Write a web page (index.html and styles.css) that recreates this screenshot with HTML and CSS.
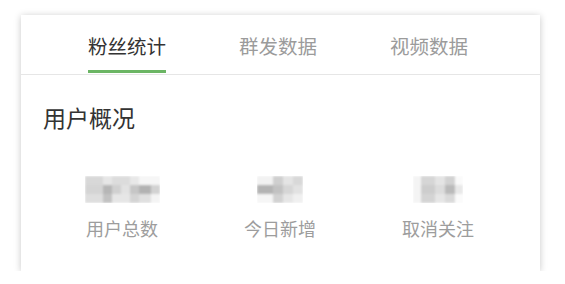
FILE: index.html
```html
<!DOCTYPE html>
<html lang="zh-CN">
  <head>
    <meta charset="UTF-8" />
    <meta name="viewport" content="width=device-width, initial-scale=1.0" />
    <title>粉丝统计</title>
    <link rel="stylesheet" href="styles.css">
  </head>
  <body>
    <svg class="defs" width="0" height="0">
      <filter id="mosaicBlur"><feGaussianBlur stdDeviation="1.1" /></filter>
    </svg>

    <div class="card">
      <div class="tabs">
        <div class="tab active">粉丝统计</div>
        <div class="tab">群发数据</div>
        <div class="tab">视频数据</div>
      </div>

      <h2 class="title">用户概况</h2>

      <!-- 数值已打码 -->
      <div class="stats">
        <div class="stat">
          <svg class="mask" width="75" height="27" viewBox="0 0 75 27">
            <g filter="url(#mosaicBlur)">
              <rect x="0" y="0" width="18" height="9" fill="#d8d8d8" />
              <rect x="18" y="0" width="9" height="9" fill="#e6e6e6" />
              <rect x="27" y="0" width="18" height="9" fill="#dcdcdc" />
              <rect x="45" y="0" width="9" height="9" fill="#e8e8e8" />
              <rect x="54" y="0" width="21" height="9" fill="#f6f6f6" />
              <rect x="0" y="9" width="18" height="9" fill="#d4d4d4" />
              <rect x="18" y="9" width="9" height="9" fill="#b6b6b6" />
              <rect x="27" y="9" width="9" height="9" fill="#d0d0d0" />
              <rect x="36" y="9" width="9" height="9" fill="#e2e2e2" />
              <rect x="45" y="9" width="9" height="9" fill="#c6c6c6" />
              <rect x="54" y="9" width="12" height="9" fill="#b2b2b2" />
              <rect x="66" y="9" width="9" height="9" fill="#d2d2d2" />
              <rect x="0" y="18" width="18" height="9" fill="#dedede" />
              <rect x="18" y="18" width="9" height="9" fill="#c2c2c2" />
              <rect x="27" y="18" width="18" height="9" fill="#e6e6e6" />
              <rect x="45" y="18" width="9" height="9" fill="#d4d4d4" />
              <rect x="54" y="18" width="12" height="9" fill="#e0e0e0" />
              <rect x="66" y="18" width="9" height="9" fill="#f4f4f4" />
            </g>
          </svg>
          <div class="label">用户总数</div>
        </div>
        <div class="stat">
          <svg class="mask" width="46" height="27" viewBox="0 0 46 27">
            <g filter="url(#mosaicBlur)">
              <rect x="0" y="0" width="16" height="9" fill="#f2f2f2" />
              <rect x="16" y="0" width="10" height="9" fill="#cfcfcf" />
              <rect x="26" y="0" width="10" height="9" fill="#e4e4e4" />
              <rect x="36" y="0" width="10" height="9" fill="#d8d8d8" />
              <rect x="0" y="9" width="16" height="9" fill="#b4b4b4" />
              <rect x="16" y="9" width="10" height="9" fill="#c2c2c2" />
              <rect x="26" y="9" width="10" height="9" fill="#d6d6d6" />
              <rect x="36" y="9" width="10" height="9" fill="#e2e2e2" />
              <rect x="0" y="18" width="16" height="9" fill="#f6f6f6" />
              <rect x="16" y="18" width="10" height="9" fill="#d2d2d2" />
              <rect x="26" y="18" width="10" height="9" fill="#e6e6e6" />
              <rect x="36" y="18" width="10" height="9" fill="#f0f0f0" />
            </g>
          </svg>
          <div class="label">今日新增</div>
        </div>
        <div class="stat">
          <svg class="mask" width="50" height="27" viewBox="0 0 50 27">
            <g filter="url(#mosaicBlur)">
              <rect x="0" y="0" width="8" height="27" fill="#f4f4f4" />
              <rect x="8" y="0" width="14" height="9" fill="#d6d6d6" />
              <rect x="22" y="0" width="10" height="9" fill="#e4e4e4" />
              <rect x="32" y="0" width="10" height="9" fill="#d2d2d2" />
              <rect x="42" y="0" width="8" height="9" fill="#fafafa" />
              <rect x="8" y="9" width="14" height="9" fill="#cdcdcd" />
              <rect x="22" y="9" width="10" height="9" fill="#dcdcdc" />
              <rect x="32" y="9" width="10" height="9" fill="#bababa" />
              <rect x="42" y="9" width="8" height="9" fill="#e8e8e8" />
              <rect x="8" y="18" width="14" height="9" fill="#d4d4d4" />
              <rect x="22" y="18" width="10" height="9" fill="#e6e6e6" />
              <rect x="32" y="18" width="10" height="9" fill="#dadada" />
              <rect x="42" y="18" width="8" height="9" fill="#fbfbfb" />
            </g>
          </svg>
          <div class="label">取消关注</div>
        </div>
      </div>
    </div>
  </body>
</html>
```

FILE: styles.css
```css
body {
  margin: 0;
  background-color: #fff;
  font-family: "Noto Sans CJK SC", "Noto Sans", sans-serif;
}

.defs {
  position: absolute;
}

.card {
  margin: 15px 0 0 21px;
  width: 519px;
  height: 256px;
  background-color: #fff;
  box-shadow: 0 1px 7px rgba(0, 0, 0, 0.22);
}

.tabs {
  display: flex;
  gap: 73px;
  height: 60px;
  padding: 0 0 1px 67px;
  box-sizing: border-box;
  border-bottom: 1px solid #e6e6e6;
}

.tab {
  box-sizing: border-box;
  padding-top: 19px;
  border-bottom: 3px solid transparent;
  font-size: 19.5px;
  line-height: 24px;
  color: #9b9b9b;
}

.tab.active {
  color: #333;
  border-bottom-color: #6bb564;
}

.title {
  margin: 28px 0 0 22px;
  font-size: 23px;
  font-weight: normal;
  line-height: 28px;
  color: #333;
}

.stats {
  display: grid;
  grid-template-columns: repeat(3, 158px);
  padding-left: 22px;
  margin-top: 45px;
}

.stat {
  display: flex;
  flex-direction: column;
  align-items: center;
}

.mask {
  display: block;
}

.label {
  margin-top: 14px;
  font-size: 18px;
  line-height: 22px;
  color: #9d9d9d;
}
```
